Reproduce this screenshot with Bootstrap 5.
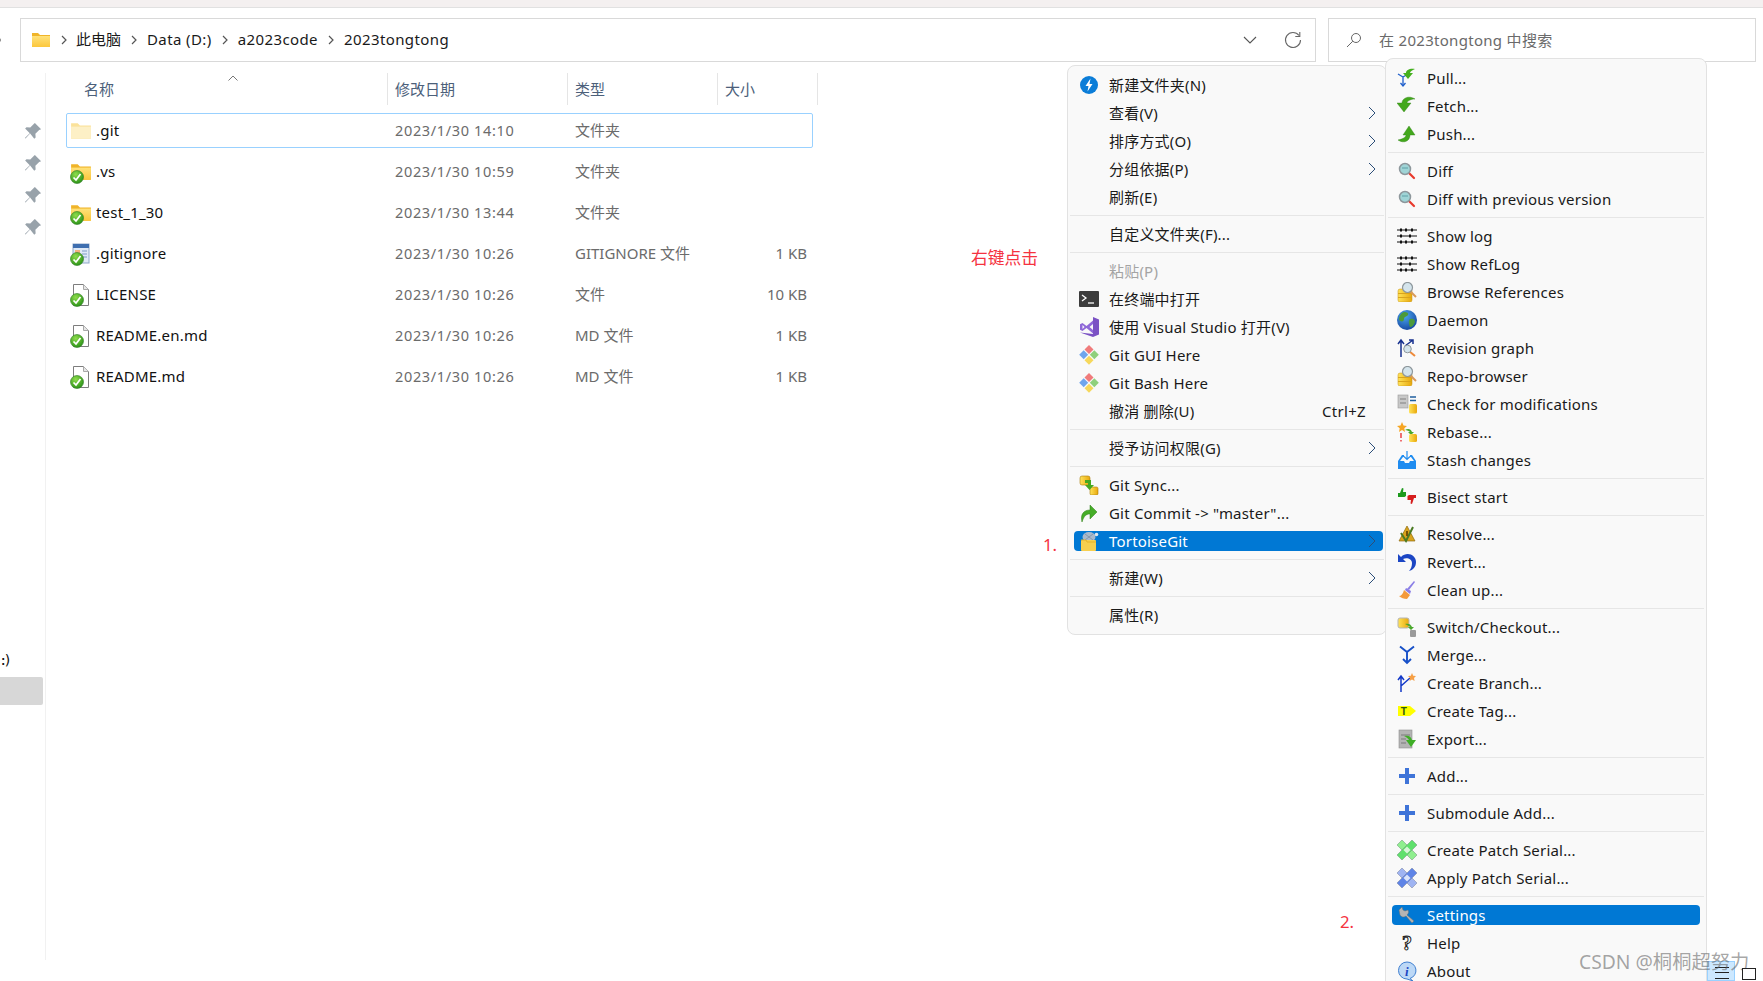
<!DOCTYPE html>
<html lang="zh-CN">
<head>
<meta charset="UTF-8">
<title>2023tongtong</title>
<link href="https://cdn.jsdelivr.net/npm/bootstrap@5.3.0/dist/css/bootstrap.min.css" rel="stylesheet">
<style>
    html, body { height: 100%; }
    body {
        width: 1763px; height: 981px; overflow: hidden; position: relative;
        background: #fff; color: #111;
        font-family: "Noto Sans", "Noto Sans CJK SC", sans-serif; font-size: 15px;
    }
    .top-strip { height: 8px; background: #f4f0f0; border-bottom: 1px solid #e1e1e1; }
    .tool-row { padding: 10px 7px 0 20px; gap: 12px; height: 54px; }
    .path-box { width: 1296px; height: 44px; border: 1px solid #d9d9d9; padding: 0 13px 0 10px; }
    .path-part { letter-spacing: .4px; color: #1a1a1a; padding-bottom: 2px; }
    .path-part.tight { letter-spacing: 0; }
    .path-sep { margin: 0 10px; }
    .path-sep.near { margin-right: 9px; }
    .path-gap { margin-left: 27px; }
    .search-box { width: 428px; height: 44px; border: 1px solid #d9d9d9; padding-left: 17px; gap: 17px; color: #6a6a6a; letter-spacing: .3px; }
    .back-tick { position: absolute; left: -3px; top: 38px; width: 4px; height: 4px; background: #8a8a8a; border-radius: 50%; }

    .side-col { width: 46px; height: 887px; margin-top: 11px; border-right: 1px solid #f1f1f1; }
    .pin-stack { padding-top: 48px; gap: 12px; padding-left: 23px; }
    .side-frag { margin-top: 413px; height: 20px; line-height: 20px; font-family: "DejaVu Sans Mono", monospace; font-size: 14px; letter-spacing: -4px; margin-left: -1px; }
    .side-sel { width: 43px; height: 28px; margin-top: 7px; background: #d7d7d7; border-radius: 0 2px 2px 0; }

    .file-area { padding: 11px 0 0 20px; width: 780px; }
    .head-row { height: 32px; color: #4c607a; font-size: 15px; margin-bottom: 8px; }
    .head-cell { height: 32px; border-right: 1px solid #e5e5e5; padding-left: 7px; line-height: 33px; }
    .head-name { width: 322px; padding-left: 18px; }
    .head-date { width: 180px; }
    .head-type { width: 150px; }
    .head-size { width: 100px; }
    .sort-mark { margin: 2px 0 0 114px; align-self: flex-start; }
    .file-row { width: 747px; height: 35px; margin-bottom: 6px; border: 1px solid transparent; border-radius: 2px; letter-spacing: .2px; }
    .file-row.picked { border-color: #99d1ff; }
    .c-name { width: 328px; padding-left: 3px; gap: 4px; color: #111; }
    .c-date { width: 180px; color: #6b6b6b; letter-spacing: .65px; font-size: 14.5px; }
    .c-type { width: 143px; color: #6b6b6b; font-size: 15px; letter-spacing: 0; }
    .c-size { flex: 1; text-align: right; padding-right: 5px; color: #6b6b6b; font-size: 15px; letter-spacing: 0; }
    .file-ico { width: 22px; height: 24px; flex: none; }

    .ctx-menu {
        padding: 5px 0 0; background: #f9f9f9; border: 1px solid #e2e2e2; border-radius: 8px;
        font-size: 15px; letter-spacing: .2px; color: #1a1a1a;
    }
    #mainMenu { display: flex; flex-direction: column; left: 1067px; top: 65px; width: 320px; height: 570px; z-index: 5; }
    #gitMenu { display: flex; flex-direction: column; left: 1385px; top: 58px; width: 322px; height: 940px; z-index: 6; }
    .ctx-item { display: flex; align-items: center; flex: none; height: 28px; padding: 0 10px 0 11px; gap: 10px; color: #1a1a1a; }
    .ctx-item svg.ctx-ico { width: 20px; height: 20px; flex: none; }
    .ctx-blank { width: 20px; flex: none; }
    .ctx-item.ctx-on, .ctx-item.ctx-on:hover {
        width: auto; height: 20px; margin: 4px 3px 4px 6px; padding: 0 7px 0 5px;
        background: #0078d4; color: #fff; border-radius: 4px;
    }
    #gitMenu .ctx-item.ctx-on { margin-right: 6px; }
    .ctx-item.ctx-off { color: #a4a4a4; }
    .ctx-arrow { margin-left: auto; width: 8px; height: 14px; flex: none; }
    .ctx-key { margin-left: auto; padding-right: 10px; letter-spacing: .3px; }
    .ctx-line { margin: 4px 2px; border-top: 1px solid #e6e6e6; opacity: 1; height: 0; flex: none; }

    .red-note { position: absolute; color: #f5333f; font-size: 16.800px; line-height: 20px; z-index: 7; }
    .mark-wm { position: absolute; left: 1579px; top: 949px; color: rgba(90, 90, 90, .55); font-size: 19.300px; line-height: 26px; z-index: 9; white-space: nowrap; }
    .view-btn-a { position: absolute; left: 1707px; top: 961px; width: 28px; height: 20px; background: #cce8ff; border: 1px solid #99d1ff; z-index: 8; }
    .view-btn-b { position: absolute; left: 1742px; top: 968px; width: 14px; height: 12px; border: 1.5px solid #222; z-index: 10; background: #fff; }
    .view-lines { display: block; margin: 5px 0 0 7px; width: 14px; height: 12px; border-top: 1.5px solid #222; border-bottom: 1.5px solid #222; position: relative; }
    .view-lines::after { content: ""; position: absolute; left: 0; right: 0; top: 3.5px; border-top: 1.5px solid #222; }
</style>
</head>
<body>

<svg width="0" height="0" class="position-absolute">
    <defs>
        <linearGradient id="folderFill" x1="0" y1="0" x2="0" y2="1"><stop offset="0" stop-color="#ffe27a"/><stop offset="1" stop-color="#fcc73c"/></linearGradient>
        <linearGradient id="coinFill" x1="0" y1="0" x2="1" y2="0"><stop offset="0" stop-color="#ffe35a"/><stop offset="1" stop-color="#e8a80c"/></linearGradient>
        <radialGradient id="okFill" cx=".4" cy=".3" r=".8"><stop offset="0" stop-color="#8fdc4c"/><stop offset="1" stop-color="#1f8a12"/></radialGradient>
        <radialGradient id="globeFill" cx=".4" cy=".3" r=".8"><stop offset="0" stop-color="#4aa6ee"/><stop offset="1" stop-color="#123f9a"/></radialGradient>

        <symbol id="i-folder" viewBox="0 0 20 20"><path d="M1 3h6l2 2h10v12H1z" fill="#f0b429"/><rect x="1" y="6" width="18" height="11" fill="url(#folderFill)"/></symbol>
        <symbol id="i-folder-pale" viewBox="0 0 20 20"><path d="M1 3h6l2 2h10v12H1z" fill="#fbe29a"/><rect x="1" y="6" width="18" height="11" fill="#fdf0c6"/></symbol>
        <symbol id="i-ok" viewBox="0 0 14 14"><circle cx="7" cy="7" r="6.5" fill="url(#okFill)" stroke="#2c7a1e" stroke-width=".6"/><path d="M3.5 7.5 6 10l4.5-6" fill="none" stroke="#fff" stroke-width="1.7"/></symbol>
        <symbol id="i-page" viewBox="0 0 20 24"><path d="M2.5 1.5h10l5 5v16h-15z" fill="#fff" stroke="#7d7d7d"/><path d="M12.5 1.5v5h5" fill="#e6e6e6" stroke="#a8a8a8"/></symbol>
        <symbol id="i-cfg" viewBox="0 0 20 24"><rect x="2" y="2" width="16" height="19" fill="#dfe9f6" stroke="#8fa8c8"/><rect x="2" y="2" width="16" height="4" fill="#3f6fb0"/><rect x="4" y="8" width="5" height="7" fill="#f4b183"/><path d="M11 9h5M11 12h5M11 15h5" stroke="#7f9cc6"/></symbol>
        <symbol id="i-pin" viewBox="0 0 16 16"><path d="M9.5 1.5l5 5-1.6.6-3 3 .2 3-1.1 1.1L5.700 10 2 14l-.5-.5 3.900-3.800L1.700 6l1.100-1.100 3 .2 3-3z" fill="#98a2aa"/></symbol>

        <symbol id="i-bolt" viewBox="0 0 20 20"><circle cx="10" cy="10" r="9" fill="#0b7dd8"/><path d="M11.500 3.500 6.500 11h3l-1 5.500 5-7.500h-3z" fill="#fff"/></symbol>
        <symbol id="i-term" viewBox="0 0 20 20"><rect y="2" width="20" height="16" rx="1" fill="#3c3c3c"/><path d="M3 6l4 3-4 3" fill="none" stroke="#fff" stroke-width="1.300"/><path d="M9 14h6" stroke="#fff" stroke-width="1.300"/></symbol>
        <symbol id="i-vs" viewBox="0 0 20 20"><path d="M14 0l6 2.500v15L14 20 1 15.500l13 1.500z" fill="#7b52c4"/><path d="M14 3.500 7.500 9 3.500 6 1 7.200v5.600L3.500 14l4-3 6.500 5.500z" fill="#8f68d8"/><path d="M3.500 8v4L5.500 10zM14 7l-3.500 3 3.500 3z" fill="#f9f9f9"/></symbol>
        <symbol id="i-git" viewBox="0 0 20 20"><path d="M10 0 14.500 4.500 10 9 5.500 4.500z" fill="#f07b7b"/><path d="M4.700 5.300 9.200 9.800 4.700 14.300.2 9.800z" fill="#6fa5ec"/><path d="M15.300 5.300 19.800 9.800 15.300 14.300 10.800 9.800z" fill="#8fd07c"/><path d="M10 10.800 14.500 15.300 10 19.800 5.500 15.300z" fill="#f6d85c"/></symbol>
        <symbol id="i-sync" viewBox="0 0 20 20"><rect x="1" y="1" width="10" height="9" rx="2" fill="url(#coinFill)" stroke="#a97c0a" stroke-width=".6"/><rect x="11" y="12" width="8" height="8" rx="1.500" fill="url(#coinFill)" stroke="#a97c0a" stroke-width=".6"/><path d="M6 5h6v5h3l-4.500 5L6 10h3V8H6z" fill="#45a820"/></symbol>
        <symbol id="i-commit" viewBox="0 0 20 20"><path d="M3 19C1 11 5 7 11 7V2l7 7-7 7v-5c-4 0-6 2-8 8z" fill="#46ad28" stroke="#2f7f18" stroke-width=".5"/></symbol>
        <symbol id="i-tgit" viewBox="0 0 20 20"><ellipse cx="10" cy="6" rx="6.500" ry="5" fill="#a9b9cc"/><path d="M6 3l8 6M14 3 6 9" stroke="#6f8196" stroke-width=".6"/><circle cx="17.500" cy="3.500" r="1.800" fill="#dfe6ee"/><rect x="2" y="9" width="15" height="11" rx="1" fill="#f7cf4e"/><path d="M2 9h5l1 2h9" fill="none" stroke="#e6b32a"/></symbol>

        <symbol id="i-pull" viewBox="0 0 20 20"><path d="M1 6l5 3v8M11 6 6 9" fill="none" stroke="#1e5ecb" stroke-width="1.300"/><path d="M3.500 15 6 18l2.500-3" fill="none" stroke="#1e5ecb" stroke-width="1.300"/><path d="M18 1C13 0 9 2 9 5H6l5 6 5-6h-3c0-1.500 2-2.500 5-4z" fill="#45b01e"/></symbol>
        <symbol id="i-fetch" viewBox="0 0 20 20"><path d="M18 3C12 -1 5 2 5 7H0l7 9 7-9H10c0-2 4-4 8-4z" fill="#43a81c" stroke="#2e7d13" stroke-width=".4"/></symbol>
        <symbol id="i-push" viewBox="0 0 20 20"><path d="M1 16c6 4 12 1 12-5h5L12 2 6 11h3c0 2-3 4-8 5z" fill="#43a81c" stroke="#2e7d13" stroke-width=".4"/></symbol>
        <symbol id="i-lens" viewBox="0 0 20 20"><path d="M11 11l6 6" stroke="#e8392c" stroke-width="2.200" stroke-linecap="round"/><circle cx="8" cy="8" r="5.500" fill="#9fd4d6" stroke="#8e979c" stroke-width="1.500"/><path d="M5 7h6" stroke="#5fa0a6"/></symbol>
        <symbol id="i-log" viewBox="0 0 20 20"><path d="M0 4h20M0 10h20M0 16h20" stroke="#111" stroke-width="1.100"/><path d="M3 4h2M8 4h2M14 4h2M3 10h2M12 10h2M3 16h2M8 16h2M14 16h2" stroke="#111" stroke-width="2.800"/></symbol>
        <symbol id="i-coins" viewBox="0 0 20 20"><rect x="1" y="7" width="14" height="13" rx="2" fill="url(#coinFill)" stroke="#c49010" stroke-width=".5"/><path d="M1 11.500h14M1 15.500h14" stroke="#d9a41c"/><path d="M13 9l6 6" stroke="#d99a5c" stroke-width="2"/><circle cx="10.500" cy="5.500" r="5" fill="#d4e4ec" stroke="#8e979c" stroke-width="1.200"/></symbol>
        <symbol id="i-globe" viewBox="0 0 20 20"><circle cx="10" cy="10" r="10" fill="url(#globeFill)"/><path d="M7 2c3 0 5 1 4 3S7 6 7 9s-3 3-5 1C2 6 4 3 7 2zM13 9c3-1 5 0 5 3-1 3-3 5-5 5-1-3-2-6 0-8z" fill="#4c9a3a"/></symbol>
        <symbol id="i-graph" viewBox="0 0 20 20"><path d="M4 19V3M1 6l3-4 3 4M8 8l8-6M12 2h4v4" fill="none" stroke="#17318f" stroke-width="1.500"/><path d="M12 13l6 5" stroke="#ee8a3a" stroke-width="2"/><circle cx="10.500" cy="11" r="3.800" fill="#d4e4ec" stroke="#8e979c"/></symbol>
        <symbol id="i-check" viewBox="0 0 20 20"><rect x="1" y="1" width="10" height="13" fill="#c8c8c8" stroke="#9a9a9a" stroke-width=".6"/><path d="M3 5h6M3 9h6" stroke="#808080"/><path d="M13 3h6M13 6.500h6" stroke="#1f5f9e" stroke-width="1.400"/><rect x="12" y="10" width="8" height="9.500" rx="1.500" fill="url(#coinFill)"/></symbol>
        <symbol id="i-rebase" viewBox="0 0 20 20"><path d="M5 0l1.500 3.500L10 4 7.300 6.300 8 10 5 8 2 10l.7-3.700L0 4l3.500-.5z" fill="#f6a623"/><path d="M4 11v5M4 18v1.500" stroke="#e8262a" stroke-width="1.300"/><path d="M8 8c3-2 6-1 7 2h2l-3 3-3-3h2c-1-1-3-2-5-2z" fill="#4aa82c"/><rect x="12" y="12" width="8" height="8" rx="1.500" fill="url(#coinFill)"/></symbol>
        <symbol id="i-stash" viewBox="0 0 20 20"><path d="M1 11l4-6h2v2H6l-3 4h4l1 2h4l1-2h4l-3-4h-1V5h2l4 6v8H1z" fill="#1f8cf0"/><path d="M10 1v8M7 6.500l3 3 3-3" fill="none" stroke="#1f8cf0" stroke-width="1.200"/></symbol>
        <symbol id="i-bisect" viewBox="0 0 20 20"><path d="M1 6h2l2-5 1.500.5L6 5h3v4l-1.500 1H1z" fill="#1d9a1d"/><path d="M19 11h-2l-2 6-1.500-.5L14 13h-3.500V9l1.500-1h7z" fill="#d61e1e"/></symbol>
        <symbol id="i-resolve" viewBox="0 0 20 20"><path d="M10 2l8 15H2z" fill="#d9a31c" stroke="#8c6a10" stroke-width=".7"/><path d="M4 9l5 8 7-14" fill="none" stroke="#4a7a22" stroke-width="2"/><path d="M10 7v5" stroke="#5a3c00" stroke-width="1.600"/></symbol>
        <symbol id="i-revert" viewBox="0 0 20 20"><path d="M1 2v8h8L6 7c4-2 9 0 9 4 0 3-1 6-3 8 4-1 7-4 7-9C19 3 10-1 4 5z" fill="#1c46c4"/></symbol>
        <symbol id="i-broom" viewBox="0 0 20 20"><path d="M17 1l1 1-6 8-2-1z" fill="#8a7ee6"/><path d="M9 8l5 3-1 3-5-4z" fill="#8a7ee6"/><path d="M7 10l6 5-3 4c-3 0-6-1-8-3 2 0 4-2 5-6z" fill="#f49a3c"/></symbol>
        <symbol id="i-switch" viewBox="0 0 20 20"><rect x="1" y="1" width="11" height="10" rx="2" fill="url(#coinFill)" stroke="#b5b5b5"/><path d="M8 7c3-1 6 0 7 3h2l-3 3-3-3h2c-1-1-3-2-5-3z" fill="#4aa82c"/><rect x="13" y="13" width="6" height="7" rx="1" fill="#9a9a9a"/></symbol>
        <symbol id="i-merge" viewBox="0 0 20 20"><path d="M3 1.500 10 7l7-5.500M10 7v11M6 14l4 4 4-4" fill="none" stroke="#1750c8" stroke-width="1.900"/></symbol>
        <symbol id="i-branch" viewBox="0 0 20 20"><path d="M4 19V3M1 7l3-4 3 4M4 13l9-8" fill="none" stroke="#1238c8" stroke-width="1.500"/><path d="M15 0l1.200 2.800L19 3l-2 2 .6 3-2.600-1.500L12.500 8l.5-3-2-2 2.800-.2z" fill="#f6a047"/></symbol>
        <symbol id="i-tag" viewBox="0 0 20 20"><path d="M1 5h12l6 5-6 5H1z" fill="#ffff00"/><text x="7" y="14" font-size="10" font-weight="700" text-anchor="middle" fill="#2c5a10" font-family="Liberation Sans, sans-serif">T</text></symbol>
        <symbol id="i-export" viewBox="0 0 20 20"><rect x="2" y="1" width="13" height="18" fill="#b4b4b4" stroke="#8e8e8e" stroke-width=".6"/><path d="M4 6h9M4 10h5M4 14h5" stroke="#7a7a7a"/><path d="M7 7c4-1 7 0 8 4h4l-5 7-5-7h3c-1-2-3-3-5-4z" fill="#3fae26"/></symbol>
        <symbol id="i-plus" viewBox="0 0 20 20"><path d="M8 2h4v6h6v4h-6v6H8v-6H2V8h6z" fill="#3f74d8"/></symbol>
        <symbol id="i-patch-g" viewBox="0 0 20 20"><g stroke="#6f8f78" stroke-width=".5"><path d="M5 0l15 15-5 5L0 5z" fill="#8fef8f"/><path d="M15 0l5 5L5 20l-5-5z" fill="#5fe06c"/></g><rect x="7.500" y="7.500" width="5" height="5" fill="#d8f5d8" transform="rotate(45 10 10)"/></symbol>
        <symbol id="i-patch-b" viewBox="0 0 20 20"><g stroke="#76809a" stroke-width=".5"><path d="M5 0l15 15-5 5L0 5z" fill="#9fb4f2"/><path d="M15 0l5 5L5 20l-5-5z" fill="#5f84e6"/></g><rect x="7.500" y="7.500" width="5" height="5" fill="#dbe4fa" transform="rotate(45 10 10)"/></symbol>
        <symbol id="i-wrench" viewBox="0 0 20 20"><path d="M2 5 5 2l1 3 2 1 3-1c1 2 .6 3.500-1 5l7 6-2 2-6-7c-2 1.500-4 1.500-6-1z" fill="#b4b4b4" stroke="#6e6e6e" stroke-width=".5"/></symbol>
        <symbol id="i-help" viewBox="0 0 20 20"><text x="10" y="17" font-size="20" font-weight="700" text-anchor="middle" fill="#fff" stroke="#222" stroke-width="1" font-family="Liberation Serif, serif">?</text></symbol>
        <symbol id="i-about" viewBox="0 0 20 20"><path d="M10 1a9 8.500 0 0 1 3 16.500L16 20l-6-2A8.500 8.500 0 0 1 10 1z" fill="#bcd8f6" stroke="#3f7fd0"/><text x="10" y="15" font-size="13" font-weight="700" font-style="italic" text-anchor="middle" fill="#1c46c4" font-family="Liberation Serif, serif">i</text></symbol>
        <symbol id="i-chev" viewBox="0 0 8 14"><path d="M1 1l6 6-6 6" fill="none" stroke="#2c4e78" stroke-width="1"/></symbol>
        <symbol id="i-crumb" viewBox="0 0 6 10"><path d="M1 1l4 4-4 4" fill="none" stroke="#555" stroke-width="1.200"/></symbol>
    </defs>
</svg>

<div class="top-strip"></div>

<!-- address bar and search -->
<div class="tool-row d-flex">
    <i class="back-tick"></i>
    <div class="path-box d-flex align-items-center">
        <svg width="20" height="20"><use href="#i-folder"/></svg>
        <svg class="path-sep near" width="6" height="10"><use href="#i-crumb"/></svg>
        <span class="path-part tight">此电脑</span>
        <svg class="path-sep" width="6" height="10"><use href="#i-crumb"/></svg>
        <span class="path-part">Data (D:)</span>
        <svg class="path-sep" width="6" height="10"><use href="#i-crumb"/></svg>
        <span class="path-part">a2023code</span>
        <svg class="path-sep" width="6" height="10"><use href="#i-crumb"/></svg>
        <span class="path-part">2023tongtong</span>
        <svg class="ms-auto" width="14" height="10" viewBox="0 0 14 10"><path d="M1 2l6 6 6-6" fill="none" stroke="#555" stroke-width="1.100"/></svg>
        <svg class="path-gap" width="18" height="18" viewBox="0 0 18 18"><path d="M15 4.500A7.500 7.500 0 1 0 16.500 9" fill="none" stroke="#666" stroke-width="1.100"/><path d="M15.800 1v4.500h-4.500" fill="none" stroke="#666" stroke-width="1.100"/></svg>
    </div>
    <div class="search-box d-flex align-items-center">
        <svg width="16" height="16" viewBox="0 0 16 16"><circle cx="10" cy="6" r="4.500" fill="none" stroke="#666"/><path d="M6.800 9.200 1 15" stroke="#666"/></svg>
        <span>在 2023tongtong 中搜索</span>
    </div>
</div>

<!-- explorer body -->
<div class="d-flex">
    <div class="side-col">
        <div class="pin-stack d-flex flex-column">
            <svg width="20" height="20"><use href="#i-pin"/></svg>
            <svg width="20" height="20"><use href="#i-pin"/></svg>
            <svg width="20" height="20"><use href="#i-pin"/></svg>
            <svg width="20" height="20"><use href="#i-pin"/></svg>
        </div>
        <div class="side-frag">:)</div>
        <div class="side-sel"></div>
    </div>

    <div class="file-area">
        <div class="head-row d-flex">
            <div class="head-cell head-name d-flex"><span>名称</span><svg class="sort-mark" width="10" height="6" viewBox="0 0 10 6"><path d="M.5 5.500 5 1l4.500 4.500" fill="none" stroke="#777"/></svg></div>
            <div class="head-cell head-date">修改日期</div>
            <div class="head-cell head-type">类型</div>
            <div class="head-cell head-size">大小</div>
        </div>

        <div class="file-row picked d-flex align-items-center">
            <div class="c-name d-flex align-items-center"><svg class="file-ico"><use href="#i-folder-pale"/></svg><span>.git</span></div>
            <div class="c-date">2023/1/30 14:10</div><div class="c-type">文件夹</div><div class="c-size"></div>
        </div>
        <div class="file-row d-flex align-items-center">
            <div class="c-name d-flex align-items-center"><svg class="file-ico"><use href="#i-folder"/><use href="#i-ok" x="0" y="10" width="14" height="14"/></svg><span>.vs</span></div>
            <div class="c-date">2023/1/30 10:59</div><div class="c-type">文件夹</div><div class="c-size"></div>
        </div>
        <div class="file-row d-flex align-items-center">
            <div class="c-name d-flex align-items-center"><svg class="file-ico"><use href="#i-folder"/><use href="#i-ok" x="0" y="10" width="14" height="14"/></svg><span>test_1_30</span></div>
            <div class="c-date">2023/1/30 13:44</div><div class="c-type">文件夹</div><div class="c-size"></div>
        </div>
        <div class="file-row d-flex align-items-center">
            <div class="c-name d-flex align-items-center"><svg class="file-ico"><use href="#i-cfg"/><use href="#i-ok" x="0" y="10" width="14" height="14"/></svg><span>.gitignore</span></div>
            <div class="c-date">2023/1/30 10:26</div><div class="c-type">GITIGNORE 文件</div><div class="c-size">1 KB</div>
        </div>
        <div class="file-row d-flex align-items-center">
            <div class="c-name d-flex align-items-center"><svg class="file-ico"><use href="#i-page"/><use href="#i-ok" x="0" y="10" width="14" height="14"/></svg><span>LICENSE</span></div>
            <div class="c-date">2023/1/30 10:26</div><div class="c-type">文件</div><div class="c-size">10 KB</div>
        </div>
        <div class="file-row d-flex align-items-center">
            <div class="c-name d-flex align-items-center"><svg class="file-ico"><use href="#i-page"/><use href="#i-ok" x="0" y="10" width="14" height="14"/></svg><span>README.en.md</span></div>
            <div class="c-date">2023/1/30 10:26</div><div class="c-type">MD 文件</div><div class="c-size">1 KB</div>
        </div>
        <div class="file-row d-flex align-items-center">
            <div class="c-name d-flex align-items-center"><svg class="file-ico"><use href="#i-page"/><use href="#i-ok" x="0" y="10" width="14" height="14"/></svg><span>README.md</span></div>
            <div class="c-date">2023/1/30 10:26</div><div class="c-type">MD 文件</div><div class="c-size">1 KB</div>
        </div>
    </div>
</div>

<!-- explorer context menu -->
<div id="mainMenu" class="dropdown-menu show ctx-menu">
    <div class="dropdown-item ctx-item"><svg class="ctx-ico"><use href="#i-bolt"/></svg>新建文件夹(N)</div>
    <div class="dropdown-item ctx-item"><span class="ctx-blank"></span>查看(V)<svg class="ctx-arrow"><use href="#i-chev"/></svg></div>
    <div class="dropdown-item ctx-item"><span class="ctx-blank"></span>排序方式(O)<svg class="ctx-arrow"><use href="#i-chev"/></svg></div>
    <div class="dropdown-item ctx-item"><span class="ctx-blank"></span>分组依据(P)<svg class="ctx-arrow"><use href="#i-chev"/></svg></div>
    <div class="dropdown-item ctx-item"><span class="ctx-blank"></span>刷新(E)</div>
    <hr class="ctx-line">
    <div class="dropdown-item ctx-item"><span class="ctx-blank"></span>自定义文件夹(F)...</div>
    <hr class="ctx-line">
    <div class="dropdown-item ctx-item ctx-off"><span class="ctx-blank"></span>粘贴(P)</div>
    <div class="dropdown-item ctx-item"><svg class="ctx-ico"><use href="#i-term"/></svg>在终端中打开</div>
    <div class="dropdown-item ctx-item"><svg class="ctx-ico"><use href="#i-vs"/></svg>使用 Visual Studio 打开(V)</div>
    <div class="dropdown-item ctx-item"><svg class="ctx-ico"><use href="#i-git"/></svg>Git GUI Here</div>
    <div class="dropdown-item ctx-item"><svg class="ctx-ico"><use href="#i-git"/></svg>Git Bash Here</div>
    <div class="dropdown-item ctx-item"><span class="ctx-blank"></span>撤消 删除(U)<span class="ctx-key">Ctrl+Z</span></div>
    <hr class="ctx-line">
    <div class="dropdown-item ctx-item"><span class="ctx-blank"></span>授予访问权限(G)<svg class="ctx-arrow"><use href="#i-chev"/></svg></div>
    <hr class="ctx-line">
    <div class="dropdown-item ctx-item"><svg class="ctx-ico"><use href="#i-sync"/></svg>Git Sync...</div>
    <div class="dropdown-item ctx-item"><svg class="ctx-ico"><use href="#i-commit"/></svg>Git Commit -&gt; "master"...</div>
    <div class="dropdown-item ctx-item ctx-on"><svg class="ctx-ico"><use href="#i-tgit"/></svg>TortoiseGit<svg class="ctx-arrow"><use href="#i-chev"/></svg></div>
    <hr class="ctx-line">
    <div class="dropdown-item ctx-item"><span class="ctx-blank"></span>新建(W)<svg class="ctx-arrow"><use href="#i-chev"/></svg></div>
    <hr class="ctx-line">
    <div class="dropdown-item ctx-item"><span class="ctx-blank"></span>属性(R)</div>
</div>

<!-- TortoiseGit submenu -->
<div id="gitMenu" class="dropdown-menu show ctx-menu">
    <div class="dropdown-item ctx-item"><svg class="ctx-ico"><use href="#i-pull"/></svg>Pull...</div>
    <div class="dropdown-item ctx-item"><svg class="ctx-ico"><use href="#i-fetch"/></svg>Fetch...</div>
    <div class="dropdown-item ctx-item"><svg class="ctx-ico"><use href="#i-push"/></svg>Push...</div>
    <hr class="ctx-line">
    <div class="dropdown-item ctx-item"><svg class="ctx-ico"><use href="#i-lens"/></svg>Diff</div>
    <div class="dropdown-item ctx-item"><svg class="ctx-ico"><use href="#i-lens"/></svg>Diff with previous version</div>
    <hr class="ctx-line">
    <div class="dropdown-item ctx-item"><svg class="ctx-ico"><use href="#i-log"/></svg>Show log</div>
    <div class="dropdown-item ctx-item"><svg class="ctx-ico"><use href="#i-log"/></svg>Show RefLog</div>
    <div class="dropdown-item ctx-item"><svg class="ctx-ico"><use href="#i-coins"/></svg>Browse References</div>
    <div class="dropdown-item ctx-item"><svg class="ctx-ico"><use href="#i-globe"/></svg>Daemon</div>
    <div class="dropdown-item ctx-item"><svg class="ctx-ico"><use href="#i-graph"/></svg>Revision graph</div>
    <div class="dropdown-item ctx-item"><svg class="ctx-ico"><use href="#i-coins"/></svg>Repo-browser</div>
    <div class="dropdown-item ctx-item"><svg class="ctx-ico"><use href="#i-check"/></svg>Check for modifications</div>
    <div class="dropdown-item ctx-item"><svg class="ctx-ico"><use href="#i-rebase"/></svg>Rebase...</div>
    <div class="dropdown-item ctx-item"><svg class="ctx-ico"><use href="#i-stash"/></svg>Stash changes</div>
    <hr class="ctx-line">
    <div class="dropdown-item ctx-item"><svg class="ctx-ico"><use href="#i-bisect"/></svg>Bisect start</div>
    <hr class="ctx-line">
    <div class="dropdown-item ctx-item"><svg class="ctx-ico"><use href="#i-resolve"/></svg>Resolve...</div>
    <div class="dropdown-item ctx-item"><svg class="ctx-ico"><use href="#i-revert"/></svg>Revert...</div>
    <div class="dropdown-item ctx-item"><svg class="ctx-ico"><use href="#i-broom"/></svg>Clean up...</div>
    <hr class="ctx-line">
    <div class="dropdown-item ctx-item"><svg class="ctx-ico"><use href="#i-switch"/></svg>Switch/Checkout...</div>
    <div class="dropdown-item ctx-item"><svg class="ctx-ico"><use href="#i-merge"/></svg>Merge...</div>
    <div class="dropdown-item ctx-item"><svg class="ctx-ico"><use href="#i-branch"/></svg>Create Branch...</div>
    <div class="dropdown-item ctx-item"><svg class="ctx-ico"><use href="#i-tag"/></svg>Create Tag...</div>
    <div class="dropdown-item ctx-item"><svg class="ctx-ico"><use href="#i-export"/></svg>Export...</div>
    <hr class="ctx-line">
    <div class="dropdown-item ctx-item"><svg class="ctx-ico"><use href="#i-plus"/></svg>Add...</div>
    <hr class="ctx-line">
    <div class="dropdown-item ctx-item"><svg class="ctx-ico"><use href="#i-plus"/></svg>Submodule Add...</div>
    <hr class="ctx-line">
    <div class="dropdown-item ctx-item"><svg class="ctx-ico"><use href="#i-patch-g"/></svg>Create Patch Serial...</div>
    <div class="dropdown-item ctx-item"><svg class="ctx-ico"><use href="#i-patch-b"/></svg>Apply Patch Serial...</div>
    <hr class="ctx-line">
    <div class="dropdown-item ctx-item ctx-on"><svg class="ctx-ico"><use href="#i-wrench"/></svg>Settings</div>
    <div class="dropdown-item ctx-item"><svg class="ctx-ico"><use href="#i-help"/></svg>Help</div>
    <div class="dropdown-item ctx-item"><svg class="ctx-ico"><use href="#i-about"/></svg>About</div>
</div>

<!-- annotations on top of the screenshot -->
<div class="red-note" style="left:971px;top:248px">右键点击</div>
<div class="red-note" style="left:1043px;top:535px">1.</div>
<div class="red-note" style="left:1340px;top:912px">2.</div>

<div class="view-btn-a"><span class="view-lines"></span></div>
<div class="view-btn-b"></div>
<div class="mark-wm">CSDN @桐桐超努力</div>

</body>
</html>
